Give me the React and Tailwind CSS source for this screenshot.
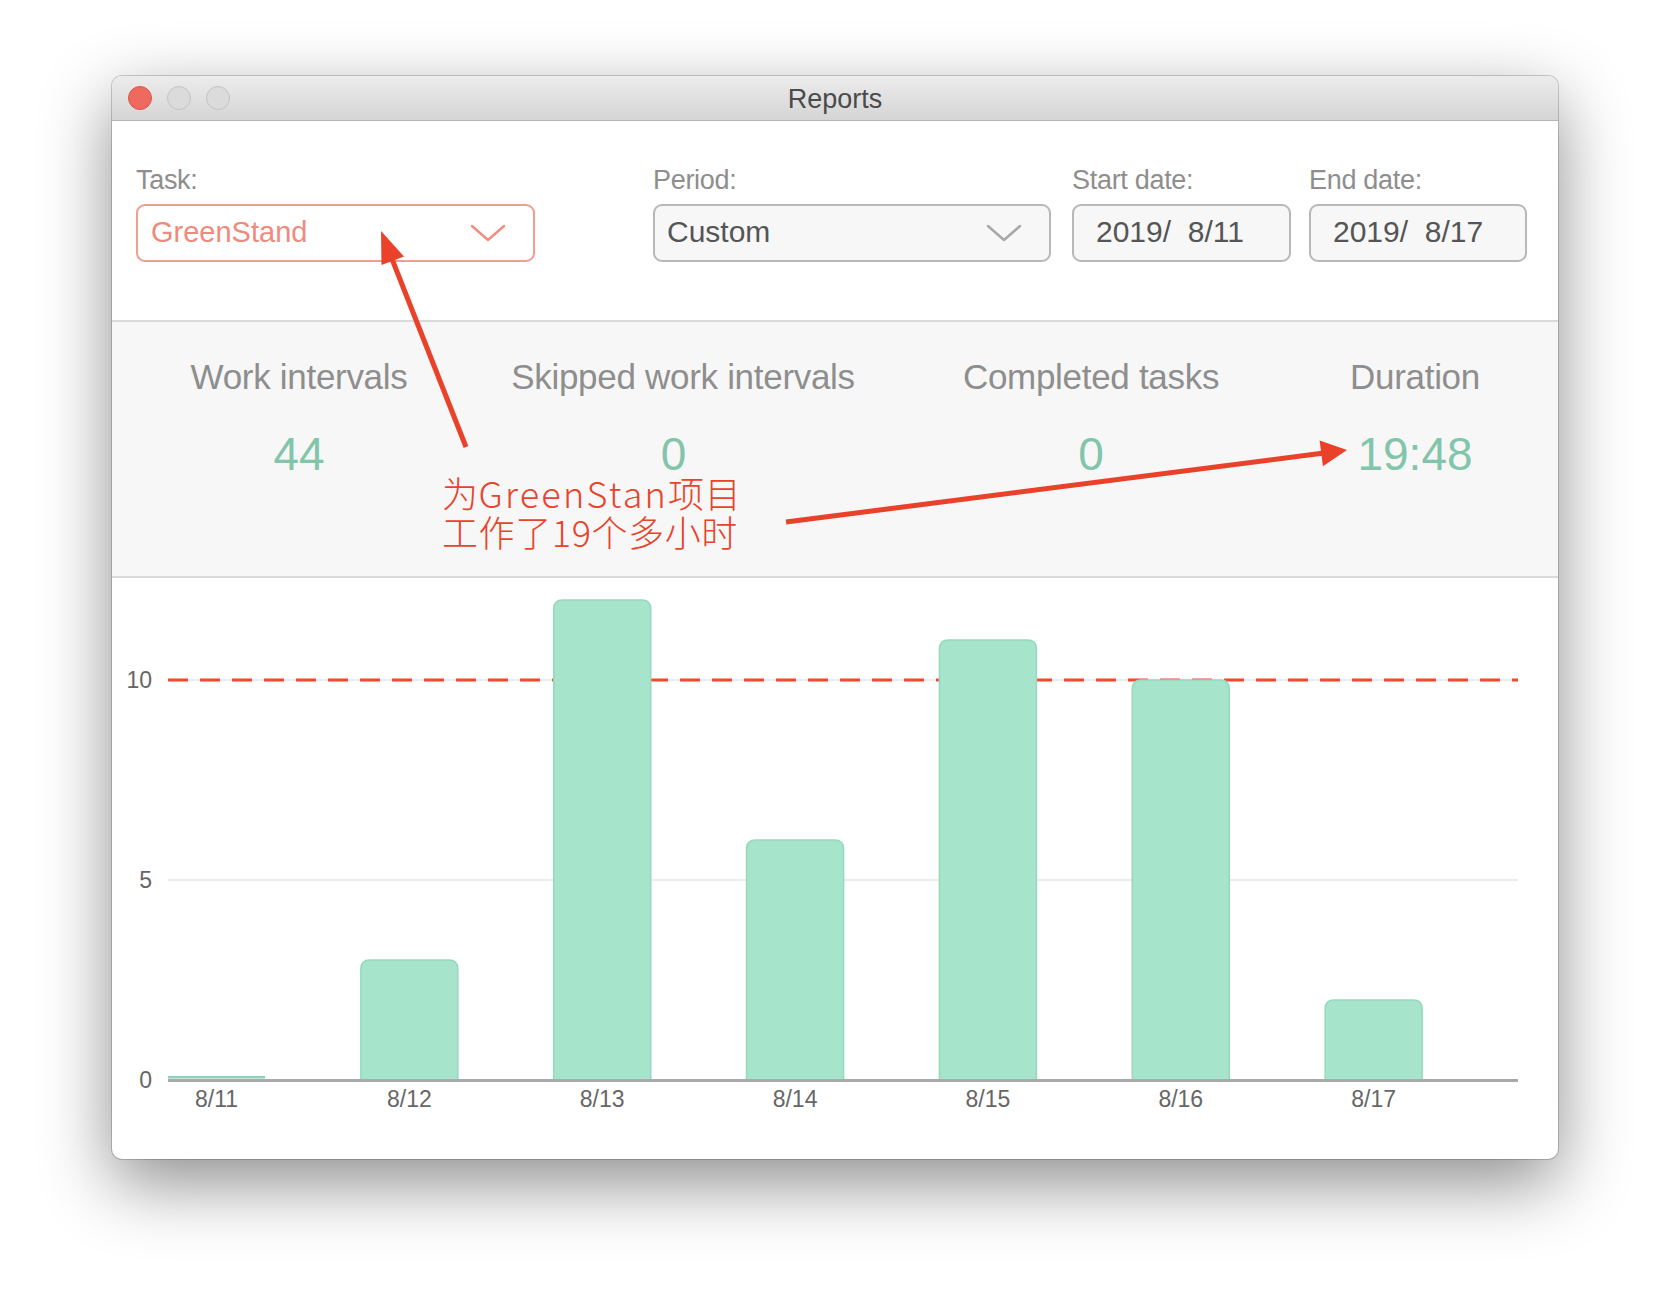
import React from 'react'

const bars = [
  { label: '8/11', value: 0 },
  { label: '8/12', value: 3 },
  { label: '8/13', value: 12 },
  { label: '8/14', value: 6 },
  { label: '8/15', value: 11 },
  { label: '8/16', value: 10 },
  { label: '8/17', value: 2 },
]

const stats = [
  { label: 'Work intervals', value: '44', shift: '' },
  { label: 'Skipped work intervals', value: '0', shift: 'pr-[19px]' },
  { label: 'Completed tasks', value: '0', shift: '' },
  { label: 'Duration', value: '19:48', shift: '' },
]

// chart geometry (svg coords, origin = top-left of chart section)
const BASE = 502
const UNIT = 40
const PLOT_X = 56
const PLOT_END = 1406
const SLOT = (PLOT_END - PLOT_X) / 7
const BAR_W = 97

const barPath = (x, y, w, h, r) => {
  const rr = Math.min(r, h)
  return `M${x},${y + h} L${x},${y + rr} Q${x},${y} ${x + rr},${y} L${x + w - rr},${y} Q${x + w},${y} ${x + w},${y + rr} L${x + w},${y + h} Z`
}

const Chevron = ({ color }) => (
  <svg width="36" height="18" viewBox="0 0 36 18" fill="none">
    <polyline points="2,2 18,16 34,2" stroke={color} strokeWidth="2.5" strokeLinecap="round" strokeLinejoin="round" />
  </svg>
)

const Field = ({ label, className, children }) => (
  <div className={className}>
    <div className="text-[27px] leading-[32px] text-[#8e8e8e] tracking-[-0.3px]">{label}</div>
    <div className="mt-[8px]">{children}</div>
  </div>
)

const Chart = () => (
  <svg width="1446" height="581" viewBox="0 0 1446 581" className="block">
    {/* gridlines */}
    <line x1={PLOT_X} x2={PLOT_END} y1={BASE - 5 * UNIT} y2={BASE - 5 * UNIT} stroke="#ececec" strokeWidth="2" />
    <line x1={PLOT_X} x2={PLOT_END} y1={BASE - 10 * UNIT} y2={BASE - 10 * UNIT} stroke="#ececec" strokeWidth="2" />
    <line
      x1={PLOT_X}
      x2={PLOT_END}
      y1={BASE - 10 * UNIT}
      y2={BASE - 10 * UNIT}
      stroke="#f0492d"
      strokeWidth="3"
      strokeDasharray="20 12"
    />
    {['0', '5', '10'].map((t) => (
      <text
        key={t}
        x="40"
        y={BASE - Number(t) * UNIT + 8}
        textAnchor="end"
        fontSize="23"
        fill="#666"
        fontFamily="'Liberation Sans', Arial, sans-serif"
      >
        {t}
      </text>
    ))}
    {bars.map((b, i) => {
      const x = PLOT_X + i * SLOT
      const h = Math.max(b.value * UNIT, 2)
      return (
        <g key={b.label}>
          {b.value > 0 ? (
            <path d={barPath(x, BASE - h, BAR_W, h, 9)} fill="#a6e4cb" stroke="#95d9be" strokeWidth="1.5" />
          ) : (
            <rect x={x} y={BASE - 4} width={BAR_W} height="2.5" fill="#8fd3b6" />
          )}
          <text
            x={x + BAR_W / 2}
            y={BASE + 27}
            textAnchor="middle"
            fontSize="23"
            fill="#666"
            fontFamily="'Liberation Sans', Arial, sans-serif"
          >
            {b.label}
          </text>
        </g>
      )
    })}
    <line x1={PLOT_X} x2={PLOT_END} y1={BASE + 0.5} y2={BASE + 0.5} stroke="#aaaaaa" strokeWidth="3" />
  </svg>
)

const Arrows = () => (
  <svg width="1446" height="1083" viewBox="0 0 1446 1083" className="absolute inset-0 pointer-events-none">
    <line x1="354" y1="371" x2="280" y2="183" stroke="#e9412a" strokeWidth="5" />
    <polygon points="269,155 269.5,189 292,180.5" fill="#e9412a" />
    <line x1="674" y1="446" x2="1212" y2="377" stroke="#e9412a" strokeWidth="5" />
    <polygon points="1235,374 1207.6,364.4 1210.9,390.2" fill="#e9412a" />
  </svg>
)

export default function App() {
  return (
    <div className="w-[1670px] h-[1308px] bg-white pt-[76px] pl-[112px]" style={{ fontFamily: "'Liberation Sans', Arial, sans-serif" }}>
      <div className="relative w-[1446px] h-[1083px] rounded-[10px] overflow-hidden bg-white shadow-[0_24px_70px_rgba(0,0,0,0.45),0_0_0_1px_rgba(0,0,0,0.18)]">
        {/* title bar */}
        <div className="relative h-[45px] flex items-center justify-center bg-gradient-to-b from-[#ececec] to-[#d5d5d5] border-b border-[#b6b6b6]">
          <div className="absolute left-[16px] top-[10px] flex gap-[15px]">
            <div className="w-[24px] h-[24px] rounded-full bg-[#ee6a5f] border border-[#d8574c]" />
            <div className="w-[24px] h-[24px] rounded-full bg-[#dbdbdb] border border-[#c2c2c2]" />
            <div className="w-[24px] h-[24px] rounded-full bg-[#dbdbdb] border border-[#c2c2c2]" />
          </div>
          <span className="text-[27px] text-[#4b4b4b] leading-none pt-[2px]">Reports</span>
        </div>

        {/* form */}
        <div className="h-[201px] border-b-2 border-[#dadada] flex pl-[24px] pt-[43px]">
          <Field label="Task:" className="w-[399px]">
            <div className="h-[58px] rounded-[9px] border-2 border-[#f19d92] bg-white flex items-center justify-between pl-[13px] pr-[27px]">
              <span className="text-[29px] text-[#f08a7d]">GreenStand</span>
              <Chevron color="#f08f82" />
            </div>
          </Field>
          <Field label="Period:" className="w-[398px] ml-[118px]">
            <div className="h-[58px] rounded-[9px] border-2 border-[#b8b8b8] bg-[#f7f7f7] flex items-center justify-between pl-[12px] pr-[27px]">
              <span className="text-[30px] text-[#555] pb-[3px]">Custom</span>
              <Chevron color="#a8a8a8" />
            </div>
          </Field>
          <Field label="Start date:" className="w-[219px] ml-[21px]">
            <div className="h-[58px] rounded-[9px] border-2 border-[#b8b8b8] bg-[#f7f7f7] flex items-center pl-[22px]">
              <span className="text-[30px] text-[#555] whitespace-pre pb-[3px]">2019/  8/11</span>
            </div>
          </Field>
          <Field label="End date:" className="w-[218px] ml-[18px]">
            <div className="h-[58px] rounded-[9px] border-2 border-[#b8b8b8] bg-[#f7f7f7] flex items-center pl-[22px]">
              <span className="text-[30px] text-[#555] whitespace-pre pb-[3px]">2019/  8/17</span>
            </div>
          </Field>
        </div>

        {/* stats */}
        <div className="h-[256px] bg-[#f7f7f7] border-b-2 border-[#dadada] pl-[61px] pt-[35px]">
          <div className="grid grid-cols-[252px_400px_300px_232px] gap-x-[58px]">
            {stats.map((s) => (
              <div key={s.label} className="text-[35px] leading-[40px] text-[#8e8e8e] tracking-[-0.3px] text-center whitespace-nowrap">
                {s.label}
              </div>
            ))}
            {stats.map((s) => (
              <div key={s.label} className={`mt-[31px] text-[46px] leading-[52px] text-[#82c5ab] text-center ${s.shift}`}>
                {s.value}
              </div>
            ))}
          </div>
        </div>

        {/* chart */}
        <div className="h-[581px]">
          <Chart />
        </div>

        {/* annotation */}
        <Arrows />
        <div
          className="absolute left-[330px] top-[397px] text-[36px] leading-[39px] text-[#e8432b] tracking-[0.6px] font-light"
          style={{ fontFamily: "'Noto Sans CJK SC', 'Noto Sans', sans-serif" }}
        >
          <div>
            为<span className="tracking-[2.2px]">GreenStan</span>项目
          </div>
          <div>工作了19个多小时</div>
        </div>
      </div>
    </div>
  )
}
